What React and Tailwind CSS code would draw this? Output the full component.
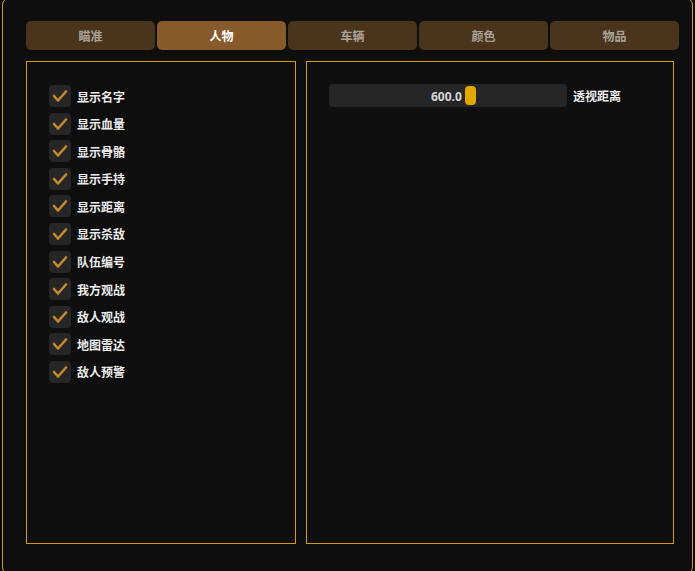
import React, { useState } from 'react';
import clsx from 'clsx';

const tabs = ['瞄准', '人物', '车辆', '颜色', '物品'];

const options = [
  '显示名字',
  '显示血量',
  '显示骨骼',
  '显示手持',
  '显示距离',
  '显示杀敌',
  '队伍编号',
  '我方观战',
  '敌人观战',
  '地图雷达',
  '敌人预警',
];

function CheckRow({ label, checked, onToggle }) {
  return (
    <div className="flex items-center gap-[6px] cursor-pointer" onClick={onToggle}>
      <div className="w-[22px] h-[22px] rounded-[4px] bg-[#262626] flex items-center justify-center">
        {checked && (
          <svg width="22" height="22" viewBox="0 0 22 22">
            <polyline points="5,11 9,15.5 17,6.5" fill="none" stroke="#c68a2c" strokeWidth="2.6" strokeLinecap="round" strokeLinejoin="round" />
          </svg>
        )}
      </div>
      <span className="text-[12px] font-bold text-[#ececec] leading-none pt-[3px]">{label}</span>
    </div>
  );
}

export default function App() {
  const [active, setActive] = useState(1);
  const [checked, setChecked] = useState(options.map(() => true));

  const toggle = (i) => setChecked((c) => c.map((v, j) => (j === i ? !v : v)));

  return (
    <div
      className="w-[695px] h-[571px] bg-[#0a0a0a] overflow-hidden"
      style={{ fontFamily: '"Noto Sans", "Noto Sans CJK SC", sans-serif' }}
    >
      <div className="ml-[2px] -mt-[3px] w-[691px] h-[578px] border border-[#d19c0c] rounded-[8px] bg-[#0e0e0e] pt-[23px] pl-[23px]">
        <div className="flex gap-[2px] w-[653px]">
          {tabs.map((t, i) => (
            <button
              key={t}
              onClick={() => setActive(i)}
              className={clsx(
                'w-[129px] h-[29px] rounded-[5px] text-[12px] font-bold flex items-center justify-center pt-[3px]',
                i === active ? 'bg-[#875a2b] text-white' : 'bg-[#4a341c] text-[#a9a29a]'
              )}
            >
              {t}
            </button>
          ))}
        </div>

        <div className="flex gap-[10px] mt-[11px]">
          <div className="w-[270px] h-[483px] border border-[#d19c0c] pt-[23px] pl-[22px] flex flex-col gap-[5.6px]">
            {options.map((o, i) => (
              <CheckRow key={o} label={o} checked={checked[i]} onToggle={() => toggle(i)} />
            ))}
          </div>

          <div className="w-[368px] h-[483px] border border-[#d19c0c] pt-[22px] pl-[22px]">
            <div className="flex items-center gap-[6px]">
              <div className="relative w-[238px] h-[23px] rounded-[4px] bg-[#262626]">
                <span className="absolute left-[102px] top-[1px] h-full flex items-center text-[12px] font-bold text-[#d8d8d8]">600.0</span>
                <div className="absolute left-[136px] top-[2px] w-[11px] h-[19px] rounded-[4px] bg-[#e2a800]" />
              </div>
              <span className="text-[12px] font-bold text-[#ececec] pt-[2px]">透视距离</span>
            </div>
          </div>
        </div>
      </div>
    </div>
  );
}
